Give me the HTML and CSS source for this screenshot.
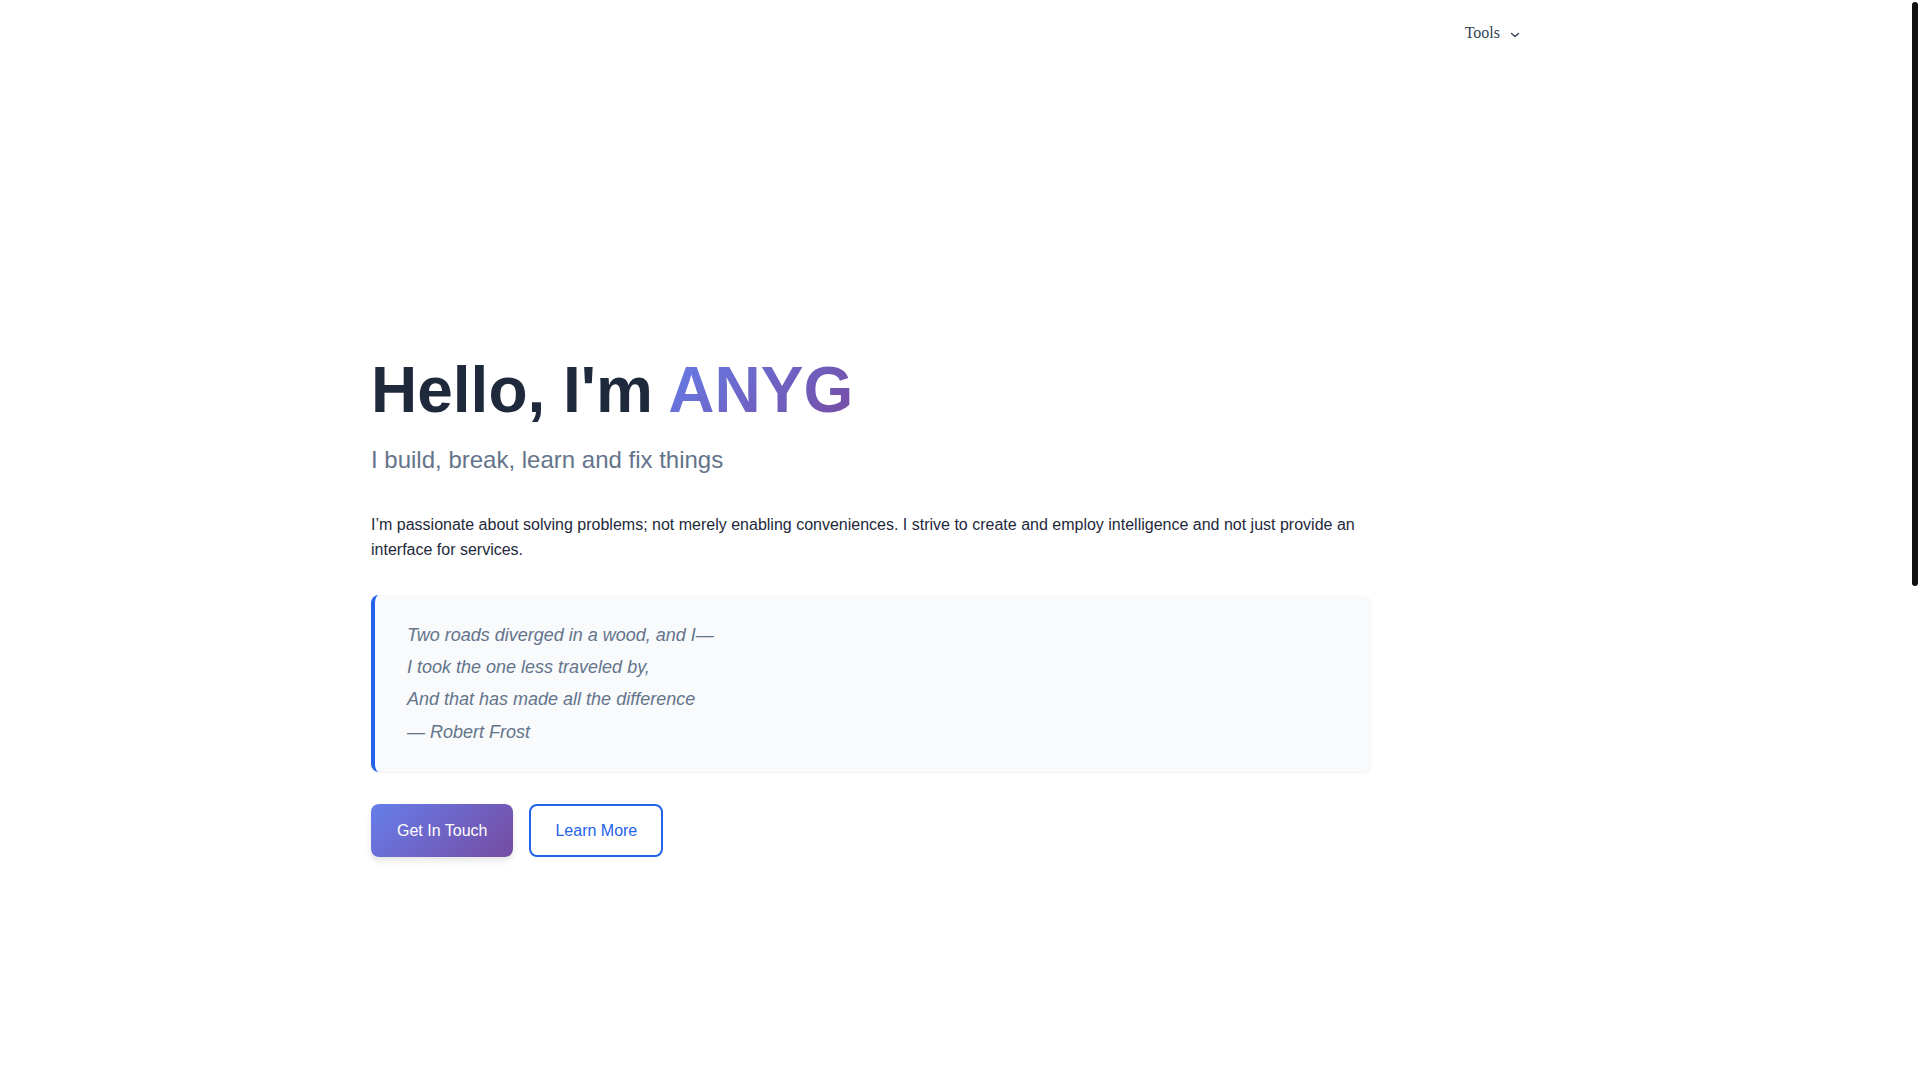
FILE: index.html
```html
<!DOCTYPE html>
<html lang="en">
<head>
  <meta charset="UTF-8">
  <title>ANYG</title>
  <link rel="stylesheet" href="styles.css">
</head>
<body>
  <header class="topnav">
    <div class="wrap">
      <button class="tools" type="button">Tools<svg width="10" height="6" viewBox="0 0 10 6"><path d="M1.5 1.5L5 4.5 8.5 1.5" fill="none" stroke="currentColor" stroke-width="1.4" stroke-linecap="round" stroke-linejoin="round"/></svg></button>
    </div>
  </header>

  <section class="hero">
    <div class="wrap">
      <div class="hero-inner">
        <h1>Hello, I'm <span class="name">ANYG</span></h1>
        <p class="subtitle">I build, break, learn and fix things</p>
        <p class="intro">I’m passionate about solving problems; not merely enabling conveniences. I strive to create and employ intelligence and not just provide an interface for services.</p>
        <blockquote class="quote">
          Two roads diverged in a wood, and I—<br>
          I took the one less traveled by,<br>
          And that has made all the difference<br>
          — Robert Frost
        </blockquote>
        <div class="actions">
          <a href="#contact" class="btn btn-primary">Get In Touch</a>
          <a href="#about" class="btn btn-outline">Learn More</a>
        </div>
      </div>
    </div>
  </section>

  <div class="scrollbar"><div class="scrollbar-thumb"></div></div>
</body>
</html>
```

FILE: styles.css
```css
* {
  margin: 0;
  padding: 0;
  box-sizing: border-box;
}

html,
body {
  height: 100%;
  overflow: hidden;
}

body {
  font-family: "Liberation Sans", Arial, sans-serif;
  color: #1e293b;
  background: #fff;
  padding-right: 8px;
}

.wrap {
  max-width: 1170px;
  margin: 0 auto;
  width: 100%;
}

/* page scrollbar */
.scrollbar {
  position: fixed;
  top: 0;
  right: 0;
  width: 8px;
  height: 100vh;
  background: #fff;
}

.scrollbar-thumb {
  width: 6px;
  height: 584px;
  margin-top: 2px;
  border-radius: 3px;
  background: #111;
}

/* top bar */
.topnav {
  height: 66px;
}

.topnav .wrap {
  height: 100%;
  display: flex;
  justify-content: flex-end;
  align-items: center;
}

.tools {
  font: 16px "Liberation Serif", "Times New Roman", serif;
  color: #334155;
  background: none;
  border: 0;
  padding: 8px 21px 8px 8px;
  cursor: pointer;
}

.tools svg {
  margin-left: 10px;
  vertical-align: baseline;
}

/* hero */
.hero {
  min-height: 100vh;
  display: flex;
  flex-direction: column;
  justify-content: center;
}

.hero-inner {
  max-width: 1000px;
}

.hero h1 {
  font-size: 64px;
  line-height: 1.1;
  font-weight: 700;
  color: #1e293b;
  margin-bottom: 16px;
}

.name {
  background: linear-gradient(135deg, #667eea, #764ba2);
  -webkit-background-clip: text;
  background-clip: text;
  color: transparent;
}

.subtitle {
  font-size: 24px;
  line-height: 1.6;
  color: #64748b;
  margin-bottom: 32px;
}

.intro {
  font-size: 16px;
  line-height: 1.6;
  color: #1e293b;
  margin-bottom: 32px;
}

.quote {
  background: #f8fafc;
  border-left: 4px solid #2563eb;
  border-radius: 8px;
  padding: 24px 32px;
  font-style: italic;
  font-size: 18px;
  line-height: 1.8;
  color: #64748b;
  box-shadow: 0 1px 2px rgba(15, 23, 42, 0.06);
  margin-bottom: 32px;
}

.actions {
  display: flex;
  gap: 16px;
}

.btn {
  display: inline-block;
  font: 16px/21px "Liberation Sans", Arial, sans-serif;
  padding: 16px 26px;
  border-radius: 8px;
  text-decoration: none;
}

.btn-primary {
  background: linear-gradient(135deg, #667eea, #764ba2);
  color: #fff;
  box-shadow: 0 4px 6px rgba(0, 0, 0, 0.1);
}

.btn-outline {
  border: 2px solid #2563eb;
  color: #2563eb;
  padding: 14px 24px;
}
```
